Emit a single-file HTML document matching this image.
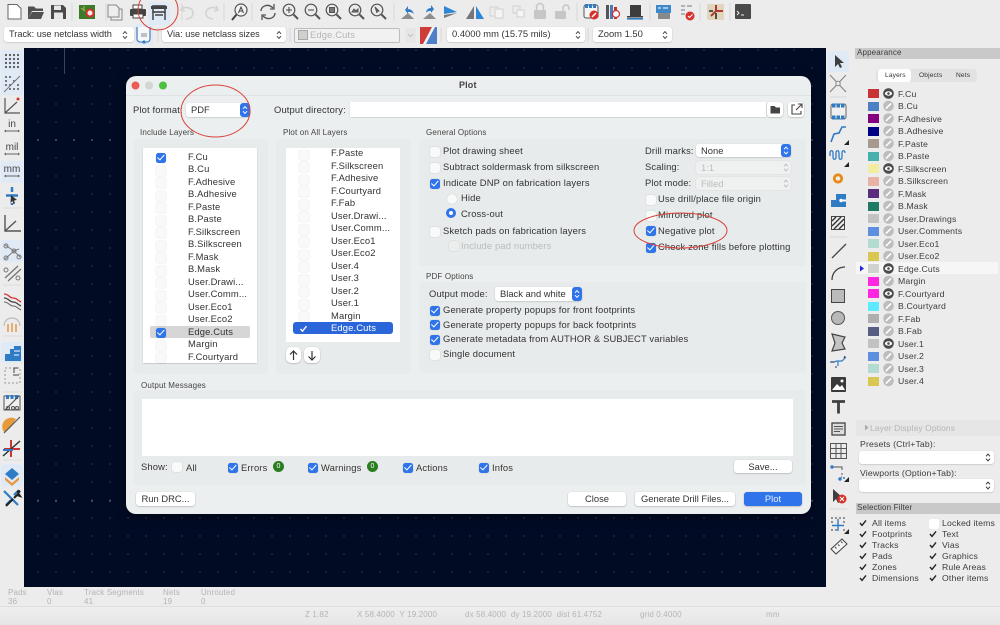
<!DOCTYPE html>
<html><head><meta charset="utf-8"><title>Plot</title>
<style>
html,body{margin:0;padding:0;background:#ececec}
#r{position:relative;width:1000px;height:625px;overflow:hidden;background:#ececec;font-family:"Liberation Sans",sans-serif;font-size:9.4px;color:#333;filter:blur(.3px)}
#r div,#r p,#r span{position:absolute;box-sizing:border-box}
p{margin:0;white-space:nowrap;line-height:12px;letter-spacing:.15px}
#cv{left:24px;top:48px;width:802px;height:539px;background-color:#010b24;background-image:radial-gradient(circle at 1px 1px,#47536c 0,#47536c .8px,transparent 1.1px),radial-gradient(circle at 1px 1px,#232f4a 0,#232f4a .7px,transparent 1px);background-size:18px 361px,18px 18px;background-position:13px 91px,13px 1px}
#dl{left:126px;top:76px;width:685px;height:438px;background:#ecefef;border-radius:10px;box-shadow:0 2px 12px rgba(0,0,0,.45)}
.g{background:#e8ebeb;border-radius:4px}
.w{background:#fff}
.s{background:#fff;border-radius:3px;box-shadow:0 .5px 1.5px rgba(0,0,0,.22);color:#333;padding-left:5px;line-height:14px}
.s span.b{right:0;top:0;width:10px;height:100%;background:#2f74ea;border-radius:3px}
.c{width:10px;height:10px;margin:.5px;background:#fff;border-radius:2.5px;box-shadow:0 0 1px rgba(0,0,0,.25)}
.c.o{background:#2f74ea}
.c.o:after{content:"";position:absolute;left:3.2px;top:.8px;width:2.6px;height:5.6px;border:solid #fff;border-width:0 1.6px 1.6px 0;transform:rotate(42deg)}
.c.n{background:#f8f9f9;box-shadow:0 0 1.2px rgba(0,0,0,.2)}
.btn{background:#fff;border-radius:3px;box-shadow:0 .5px 1.5px rgba(0,0,0,.3);text-align:center;height:14px;line-height:14px;color:#333}
.h{font-size:8px;color:#444}
.sw{width:11px;height:9px}
.hl{background:#e0eaf7;border-radius:2px}
.pn{font-size:8.7px;color:#3c3c3c}
.st{font-size:8px;color:#b4b4b4}
.u{left:0;width:24px;text-align:center;font-size:10px;color:#444;letter-spacing:0}
</style></head><body><div id="r">

<!-- status gradient -->
<div style="left:0;top:607px;width:1000px;height:18px;background:linear-gradient(#eeeeee,#e6e6e6)"></div>

<!-- toolbar highlights -->
<div class="hl" style="left:148px;top:2px;width:22px;height:23px"></div>
<div class="hl" style="left:135px;top:24px;width:18px;height:21px"></div>
<div class="hl" style="left:1px;top:50px;width:22px;height:45px"></div>
<div class="hl" style="left:1px;top:161px;width:22px;height:22px"></div>
<div class="hl" style="left:1px;top:240px;width:22px;height:22px"></div>
<div class="hl" style="left:1px;top:342px;width:22px;height:21px"></div>
<div class="hl" style="left:1px;top:464px;width:22px;height:23px"></div>
<div class="hl" style="left:828px;top:51px;width:21px;height:21px"></div>

<p class="u" style="top:119px">in</p>
<p class="u" style="top:142px">mil</p>
<p class="u" style="top:164px">mm</p>

<!-- second row -->
<div class="s" style="left:4px;top:27px;width:130px;height:15px;font-size:9.2px">Track: use netclass width</div>
<div class="s" style="left:162px;top:27px;width:124px;height:15px;font-size:9.2px">Via: use netclass sizes</div>
<div style="left:294px;top:28px;width:106px;height:15px;border:1px solid #bdbdbd;background:#f1f1f1;border-radius:2px"></div>
<div style="left:298px;top:30px;width:10px;height:10px;background:#cfcfcb;border:1px solid #a8a8a8"></div>
<p style="left:310px;top:29px;color:#b5b5b5">Edge.Cuts</p>
<div style="left:405px;top:28px;width:11px;height:15px;background:#e6e6e6;border-radius:2px"></div>
<div class="s" style="left:447px;top:27px;width:138px;height:15px;padding-left:5px;font-size:9.4px">0.4000 mm (15.75 mils)</div>
<div class="s" style="left:593px;top:27px;width:79px;height:15px;font-size:9.4px">Zoom 1.50</div>

<div id="cv"></div>
<div style="left:64px;top:48px;width:1px;height:26px;background:#3a4558"></div>

<!-- Dialog -->
<div id="dl"></div>
<div style="left:126px;top:95px;width:685px;height:1px;background:#dfe2e2"></div>
<p style="left:459px;top:79px;font-weight:bold;font-size:9px;color:#444">Plot</p>

<p style="left:133px;top:104px">Plot format:</p>
<div class="s" style="left:186px;top:103px;width:64px;height:14px">PDF<span class="b"></span></div>
<p style="left:274px;top:104px">Output directory:</p>
<div class="w" style="left:350px;top:102px;width:416px;height:15px;box-shadow:0 .5px 1px rgba(0,0,0,.2)"></div>
<div class="btn" style="left:767px;top:102px;width:16px;height:15px"></div>
<div class="btn" style="left:788px;top:102px;width:16px;height:15px"></div>

<!-- Include Layers -->
<p class="h" style="left:140px;top:127px">Include Layers</p>
<div class="g" style="left:134px;top:139px;width:134px;height:235px"></div>
<div class="w" style="left:143px;top:148px;width:114px;height:215px;box-shadow:0 .5px 1px rgba(0,0,0,.25)"></div>
<div style="left:150px;top:326px;width:100px;height:12px;background:#d6d6d6;border-radius:2px"></div>
<div class="c o" style="left:155px;top:152px"></div><p style="left:188px;top:151px">F.Cu</p>
<div class="c n" style="left:155px;top:165px"></div><p style="left:188px;top:163px">B.Cu</p>
<div class="c n" style="left:155px;top:177px"></div><p style="left:188px;top:176px">F.Adhesive</p>
<div class="c n" style="left:155px;top:190px"></div><p style="left:188px;top:188px">B.Adhesive</p>
<div class="c n" style="left:155px;top:202px"></div><p style="left:188px;top:201px">F.Paste</p>
<div class="c n" style="left:155px;top:215px"></div><p style="left:188px;top:213px">B.Paste</p>
<div class="c n" style="left:155px;top:227px"></div><p style="left:188px;top:226px">F.Silkscreen</p>
<div class="c n" style="left:155px;top:240px"></div><p style="left:188px;top:238px">B.Silkscreen</p>
<div class="c n" style="left:155px;top:252px"></div><p style="left:188px;top:251px">F.Mask</p>
<div class="c n" style="left:155px;top:265px"></div><p style="left:188px;top:263px">B.Mask</p>
<div class="c n" style="left:155px;top:277px"></div><p style="left:188px;top:276px">User.Drawi...</p>
<div class="c n" style="left:155px;top:290px"></div><p style="left:188px;top:288px">User.Comm...</p>
<div class="c n" style="left:155px;top:302px"></div><p style="left:188px;top:301px">User.Eco1</p>
<div class="c n" style="left:155px;top:315px"></div><p style="left:188px;top:313px">User.Eco2</p>
<div class="c o" style="left:155px;top:327px"></div><p style="left:188px;top:326px">Edge.Cuts</p>
<div class="c n" style="left:155px;top:340px"></div><p style="left:188px;top:338px">Margin</p>
<div class="c n" style="left:155px;top:352px"></div><p style="left:188px;top:351px">F.Courtyard</p>

<!-- Plot on All Layers -->
<p class="h" style="left:283px;top:127px">Plot on All Layers</p>
<div class="g" style="left:276px;top:139px;width:135px;height:235px"></div>
<div class="w" style="left:286px;top:148px;width:114px;height:194px"></div>
<div style="left:293px;top:322px;width:100px;height:12px;background:#2a66da;border-radius:3px"></div>
<div class="c n" style="left:298px;top:149px"></div><p style="left:331px;top:147px">F.Paste</p>
<div class="c n" style="left:298px;top:161px"></div><p style="left:331px;top:160px">F.Silkscreen</p>
<div class="c n" style="left:298px;top:174px"></div><p style="left:331px;top:172px">F.Adhesive</p>
<div class="c n" style="left:298px;top:186px"></div><p style="left:331px;top:185px">F.Courtyard</p>
<div class="c n" style="left:298px;top:199px"></div><p style="left:331px;top:197px">F.Fab</p>
<div class="c n" style="left:298px;top:211px"></div><p style="left:331px;top:210px">User.Drawi...</p>
<div class="c n" style="left:298px;top:224px"></div><p style="left:331px;top:222px">User.Comm...</p>
<div class="c n" style="left:298px;top:236px"></div><p style="left:331px;top:235px">User.Eco1</p>
<div class="c n" style="left:298px;top:249px"></div><p style="left:331px;top:247px">User.Eco2</p>
<div class="c n" style="left:298px;top:261px"></div><p style="left:331px;top:260px">User.4</p>
<div class="c n" style="left:298px;top:274px"></div><p style="left:331px;top:272px">User.3</p>
<div class="c n" style="left:298px;top:286px"></div><p style="left:331px;top:285px">User.2</p>
<div class="c n" style="left:298px;top:299px"></div><p style="left:331px;top:297px">User.1</p>
<div class="c n" style="left:298px;top:311px"></div><p style="left:331px;top:310px">Margin</p>
<p style="left:331px;top:322px;color:#fff">Edge.Cuts</p>
<div class="btn" style="left:286px;top:347px;width:15px;height:16px;border-radius:5px"></div>
<div class="btn" style="left:304px;top:347px;width:16px;height:16px;border-radius:5px"></div>

<!-- General options -->
<p class="h" style="left:426px;top:127px">General Options</p>
<div class="g" style="left:419px;top:139px;width:387px;height:127px"></div>
<div class="c n" style="left:429px;top:146px"></div><p style="left:443px;top:145px">Plot drawing sheet</p>
<div class="c n" style="left:429px;top:162px"></div><p style="left:443px;top:161px">Subtract soldermask from silkscreen</p>
<div class="c o" style="left:429px;top:178px"></div><p style="left:443px;top:177px">Indicate DNP on fabrication layers</p>
<div class="c n" style="left:446px;top:193px;border-radius:50%"></div><p style="left:461px;top:192px">Hide</p>
<div style="left:446px;top:208px;width:10px;height:10px;border-radius:50%;background:#fff;border:3px solid #2f74ea"></div><p style="left:461px;top:208px">Cross-out</p>
<div class="c n" style="left:429px;top:226px"></div><p style="left:443px;top:225px">Sketch pads on fabrication layers</p>
<div class="c n" style="left:448px;top:240px;background:#eceeee"></div><p style="left:461px;top:240px;color:#b9bcbc">Include pad numbers</p>

<p style="left:645px;top:145px">Drill marks:</p>
<div class="s" style="left:696px;top:144px;width:95px;height:13px;line-height:13px">None<span class="b"></span></div>
<p style="left:645px;top:161px">Scaling:</p>
<div class="s" style="left:696px;top:161px;width:95px;height:13px;line-height:13px;background:#eff1f1;color:#bbb;box-shadow:0 0 1px rgba(0,0,0,.15)">1:1</div>
<p style="left:645px;top:177px">Plot mode:</p>
<div class="s" style="left:696px;top:177px;width:95px;height:13px;line-height:13px;background:#eff1f1;color:#bbb;box-shadow:0 0 1px rgba(0,0,0,.15)">Filled</div>
<div class="c n" style="left:645px;top:194px"></div><p style="left:658px;top:193px">Use drill/place file origin</p>
<div class="c n" style="left:645px;top:210px"></div><p style="left:658px;top:209px">Mirrored plot</p>
<div class="c o" style="left:645px;top:225px"></div><p style="left:658px;top:225px">Negative plot</p>
<div class="c o" style="left:645px;top:242px"></div><p style="left:658px;top:241px">Check zone fills before plotting</p>

<!-- PDF options -->
<p class="h" style="left:426px;top:271px">PDF Options</p>
<div class="g" style="left:419px;top:282px;width:387px;height:91px"></div>
<p style="left:429px;top:288px">Output mode:</p>
<div class="s" style="left:495px;top:287px;width:87px;height:14px">Black and white<span class="b"></span></div>
<div class="c o" style="left:429px;top:305px"></div><p style="left:443px;top:304px">Generate property popups for front footprints</p>
<div class="c o" style="left:429px;top:319px"></div><p style="left:443px;top:319px">Generate property popups for back footprints</p>
<div class="c o" style="left:429px;top:334px"></div><p style="left:443px;top:333px">Generate metadata from AUTHOR &amp; SUBJECT variables</p>
<div class="c n" style="left:429px;top:349px"></div><p style="left:443px;top:348px">Single document</p>

<!-- Output messages -->
<p class="h" style="left:141px;top:380px">Output Messages</p>
<div class="g" style="left:134px;top:390px;width:672px;height:95px"></div>
<div class="w" style="left:142px;top:399px;width:651px;height:57px"></div>
<p style="left:141px;top:461px">Show:</p>
<div class="c n" style="left:171px;top:461px"></div><p style="left:186px;top:462px">All</p>
<div class="c o" style="left:227px;top:462px"></div><p style="left:241px;top:462px">Errors</p>
<div style="left:273px;top:461px;width:11px;height:11px;border-radius:50%;background:#2a7d1f;color:#fff;font-size:7px;line-height:11px;text-align:center">0</div>
<div class="c o" style="left:307px;top:462px"></div><p style="left:321px;top:462px">Warnings</p>
<div style="left:367px;top:461px;width:11px;height:11px;border-radius:50%;background:#2a7d1f;color:#fff;font-size:7px;line-height:11px;text-align:center">0</div>
<div class="c o" style="left:402px;top:462px"></div><p style="left:416px;top:462px">Actions</p>
<div class="c o" style="left:478px;top:462px"></div><p style="left:492px;top:462px">Infos</p>
<div class="btn" style="left:734px;top:460px;width:58px;height:13px;line-height:13px">Save...</div>

<div class="btn" style="left:136px;top:492px;width:59px">Run DRC...</div>
<div class="btn" style="left:568px;top:492px;width:58px">Close</div>
<div class="btn" style="left:635px;top:492px;width:100px">Generate Drill Files...</div>
<div class="btn" style="left:744px;top:492px;width:58px;background:#2f74ea;color:#e8f0ff">Plot</div>

<!-- Appearance panel -->
<div style="left:855px;top:48px;width:145px;height:11px;background:#c9c9c9"></div>
<p class="pn" style="left:857px;top:47px;font-size:8px">Appearance</p>
<div style="left:876px;top:69px;width:101px;height:13px;background:#e2e2e2;border-radius:4px"></div>
<div style="left:878px;top:69px;width:33px;height:13px;background:#fff;border-radius:3px"></div>
<p style="left:885px;top:69px;font-size:6.6px;line-height:13px">Layers</p>
<p style="left:919px;top:69px;font-size:6.6px;line-height:13px">Objects</p>
<p style="left:956px;top:69px;font-size:6.6px;line-height:13px">Nets</p>
<div style="left:856px;top:262px;width:142px;height:12px;background:#f6f6f6"></div>

<div class="sw" style="left:868px;top:89px;background:#c83434"></div><p class="pn" style="left:898px;top:88px">F.Cu</p>
<div class="sw" style="left:868px;top:102px;background:#4d7fc4"></div><p class="pn" style="left:898px;top:100px">B.Cu</p>
<div class="sw" style="left:868px;top:114px;background:#84007f"></div><p class="pn" style="left:898px;top:113px">F.Adhesive</p>
<div class="sw" style="left:868px;top:127px;background:#000084"></div><p class="pn" style="left:898px;top:125px">B.Adhesive</p>
<div class="sw" style="left:868px;top:139px;background:#a79890"></div><p class="pn" style="left:898px;top:138px">F.Paste</p>
<div class="sw" style="left:868px;top:152px;background:#45b0ac"></div><p class="pn" style="left:898px;top:150px">B.Paste</p>
<div class="sw" style="left:868px;top:164px;background:#f2eda1"></div><p class="pn" style="left:898px;top:163px">F.Silkscreen</p>
<div class="sw" style="left:868px;top:177px;background:#e8b2a7"></div><p class="pn" style="left:898px;top:175px">B.Silkscreen</p>
<div class="sw" style="left:868px;top:189px;background:#5b2d7e"></div><p class="pn" style="left:898px;top:188px">F.Mask</p>
<div class="sw" style="left:868px;top:202px;background:#1e7a62"></div><p class="pn" style="left:898px;top:200px">B.Mask</p>
<div class="sw" style="left:868px;top:214px;background:#c2c2c2"></div><p class="pn" style="left:898px;top:213px">User.Drawings</p>
<div class="sw" style="left:868px;top:227px;background:#5e8ee0"></div><p class="pn" style="left:898px;top:225px">User.Comments</p>
<div class="sw" style="left:868px;top:239px;background:#b4dbd2"></div><p class="pn" style="left:898px;top:238px">User.Eco1</p>
<div class="sw" style="left:868px;top:252px;background:#d8c852"></div><p class="pn" style="left:898px;top:250px">User.Eco2</p>
<div class="sw" style="left:868px;top:264px;background:#d0d2cd"></div><p class="pn" style="left:898px;top:263px">Edge.Cuts</p>
<div class="sw" style="left:868px;top:277px;background:#ff26e2"></div><p class="pn" style="left:898px;top:275px">Margin</p>
<div class="sw" style="left:868px;top:289px;background:#ff26e2"></div><p class="pn" style="left:898px;top:288px">F.Courtyard</p>
<div class="sw" style="left:868px;top:302px;background:#5de9ff"></div><p class="pn" style="left:898px;top:300px">B.Courtyard</p>
<div class="sw" style="left:868px;top:314px;background:#afafaf"></div><p class="pn" style="left:898px;top:313px">F.Fab</p>
<div class="sw" style="left:868px;top:327px;background:#585d84"></div><p class="pn" style="left:898px;top:325px">B.Fab</p>
<div class="sw" style="left:868px;top:339px;background:#c2c2c2"></div><p class="pn" style="left:898px;top:338px">User.1</p>
<div class="sw" style="left:868px;top:352px;background:#5e8ee0"></div><p class="pn" style="left:898px;top:350px">User.2</p>
<div class="sw" style="left:868px;top:364px;background:#b4dbd2"></div><p class="pn" style="left:898px;top:363px">User.3</p>
<div class="sw" style="left:868px;top:377px;background:#d8c852"></div><p class="pn" style="left:898px;top:375px">User.4</p>

<div style="left:856px;top:420px;width:144px;height:16px;background:#e6e6e6"></div>
<p style="left:870px;top:422px;font-size:8.4px;color:#b5b5b5">Layer Display Options</p>
<p class="pn" style="left:860px;top:438px">Presets (Ctrl+Tab):</p>
<div class="s" style="left:859px;top:451px;width:135px;height:13px"></div>
<p class="pn" style="left:860px;top:467px">Viewports (Option+Tab):</p>
<div class="s" style="left:859px;top:479px;width:135px;height:13px"></div>

<div style="left:856px;top:503px;width:144px;height:11px;background:#c9c9c9"></div>
<p class="pn" style="left:857px;top:502px;font-size:8px">Selection Filter</p>
<p class="pn" style="left:872px;top:517px">All items</p>
<p class="pn" style="left:872px;top:528px">Footprints</p>
<p class="pn" style="left:872px;top:539px">Tracks</p>
<p class="pn" style="left:872px;top:550px">Pads</p>
<p class="pn" style="left:872px;top:561px">Zones</p>
<p class="pn" style="left:872px;top:572px">Dimensions</p>
<div class="c" style="left:928px;top:518px;box-shadow:none"></div>
<p class="pn" style="left:942px;top:517px">Locked items</p>
<p class="pn" style="left:942px;top:528px">Text</p>
<p class="pn" style="left:942px;top:539px">Vias</p>
<p class="pn" style="left:942px;top:550px">Graphics</p>
<p class="pn" style="left:942px;top:561px">Rule Areas</p>
<p class="pn" style="left:942px;top:572px">Other items</p>

<!-- Status -->
<div style="left:0;top:606px;width:1000px;height:1px;background:#dedede"></div>
<p class="st" style="left:8px;top:587px">Pads</p><p class="st" style="left:8px;top:596px">36</p>
<p class="st" style="left:47px;top:587px">Vias</p><p class="st" style="left:47px;top:596px">0</p>
<p class="st" style="left:84px;top:587px">Track Segments</p><p class="st" style="left:84px;top:596px">41</p>
<p class="st" style="left:163px;top:587px">Nets</p><p class="st" style="left:163px;top:596px">19</p>
<p class="st" style="left:201px;top:587px">Unrouted</p><p class="st" style="left:201px;top:596px">0</p>
<p class="st" style="left:305px;top:609px">Z 1.82</p>
<p class="st" style="left:357px;top:609px">X 58.4000&nbsp; Y 19.2000</p>
<p class="st" style="left:465px;top:609px">dx 58.4000&nbsp; dy 19.2000&nbsp; dist 61.4752</p>
<p class="st" style="left:640px;top:609px">grid 0.4000</p>
<p class="st" style="left:766px;top:609px">mm</p>

<svg width="1000" height="625" viewBox="0 0 1000 625" style="position:absolute;left:0;top:0" fill="none">
<defs>
<path id="ch" d="M-2-1.2 0-3.4 2-1.2M-2 1.2 0 3.4 2 1.2" stroke-width="1"/>
<g id="eo"><circle r="5.3" fill="#4a4a4a"/><ellipse rx="3.6" ry="2.2" fill="#fff"/><circle r="1.3" fill="#4a4a4a"/></g>
<g id="es"><circle r="5.3" fill="#bdbdbd"/><path d="M-2.6 2.6 2.6-2.6" stroke="#fff" stroke-width="1.6"/></g>
<path id="tk" d="M-3 0-1 2.4 3-2.6" stroke="#222" stroke-width="1.4"/>
</defs>

<!-- top toolbar -->
<path d="M8 4.5h9l4 4V19H8z" fill="#fff" stroke="#666"/>
<path d="M28 19V6.5h6l2 2h7V11H32l-4 8z" fill="#505050"/><path d="M32 12h12l-3 7H28z" fill="#505050"/>
<path d="M51 5h12l3 3v11H51z" fill="#4a4a4a"/><rect x="54" y="5.5" width="7" height="4.5" fill="#e8e8e8"/><rect x="54" y="12.5" width="9" height="6.5" fill="#e8e8e8"/>
<rect x="79" y="5" width="16" height="14" fill="#3d7a2c"/><circle cx="90" cy="13" r="3.5" fill="#eee" stroke="#d6322c" stroke-width="2"/><path d="M81 8l4 3M84 6v4" stroke="#a8c04a"/>
<path d="M108 5h8l3 3v9h-11zM111 17v3h11V9h-3" stroke="#888" fill="#eee"/>
<rect x="133" y="5" width="9" height="4" fill="#fff" stroke="#444"/><rect x="130" y="9" width="16" height="7" rx="1" fill="#444"/><rect x="133" y="14" width="10" height="4" fill="#fff" stroke="#444"/>
<rect x="153" y="6" width="12" height="6" fill="none" stroke="#444" stroke-width="1.6"/><rect x="151" y="6" width="16" height="3" fill="#444"/><path d="M153 12v8M165 12v8M155 15h8" stroke="#444" stroke-width="1.5"/>
<path d="M183 6l-2 4 4 1M182 9c4-3 11-1 11 4s-5 6-7 6" stroke="#d2d2d2" stroke-width="1.5"/>
<path d="M216 6l2 4-4 1M217 9c-4-3-11-1-11 4s5 6 7 6" stroke="#d2d2d2" stroke-width="1.5"/>
<circle cx="241" cy="10" r="6" stroke="#555" stroke-width="1.2" fill="#f2f2f2"/><path d="M236.5 14.5 232 20" stroke="#444" stroke-width="2"/><path d="M238.5 13l2.5-6 2.500 6M239.5 11h3" stroke="#444"/>
<path d="M261 11c0-5 7-8 12-3M275 13c0 5-7 8-12 3" stroke="#555" stroke-width="1.4"/><path d="M274 4v5h-4M262 20v-5h4" stroke="#555" stroke-width="1.3"/>
<g stroke="#555"><circle cx="289" cy="10" r="5.8" stroke-width="1.2"/><path d="M293.5 14.5 298 19" stroke-width="2"/><path d="M286 10h6M289 7v6" stroke="#444"/>
<circle cx="311" cy="10" r="5.8" stroke-width="1.2"/><path d="M315.5 14.5 320 19" stroke-width="2"/><path d="M308 10h6" stroke="#444"/>
<circle cx="332" cy="10" r="5.8" stroke-width="1.2"/><path d="M336.5 14.5 341 19" stroke-width="2"/><rect x="329.5" y="7.5" width="5" height="5" fill="#777"/>
<circle cx="355" cy="10" r="5.8" stroke-width="1.2"/><path d="M359.5 14.5 364 19" stroke-width="2"/><path d="M352 12l2-3 2 2 2-2v3z" fill="#777"/>
<circle cx="377" cy="10" r="5.8" stroke-width="1.2"/><path d="M381.5 14.5 386 19" stroke-width="2"/><path d="M375 7l4 4-2 .5 0 1.5z" fill="#666"/></g>
<path d="M401 19l7-6 6 6z" fill="#8d8d8d"/><path d="M405 10l3-4v3c3 0 5 2 6 5-2-2-4-2-6-2v2z" fill="#2f7bc4"/>
<path d="M423 19l7-6 6 6z" fill="#8d8d8d"/><path d="M434 9l-3-4v3c-3 0-5 2-5 5 1-2 3-2 5-2v2z" fill="#2f7bc4"/>
<path d="M444 6l13 6-13 2z" fill="#2f86d4"/><path d="M444 15l13-2-13 5z" fill="#777"/>
<path d="M474 6v13h-8z" fill="#777"/><path d="M476 6v13h8z" fill="#2f86d4"/>
<g stroke="#d0d0d0" fill="#ececec"><rect x="490" y="7" width="8" height="9"/><rect x="495" y="9" width="8" height="9" fill="#f4f4f4"/><rect x="513" y="6" width="7" height="7"/><rect x="517" y="10" width="7" height="7" fill="#f4f4f4"/></g>
<rect x="534" y="10" width="12" height="9" rx="1" fill="#c6c6c6"/><path d="M536.5 10V7a3.5 3.5 0 0 1 7 0v3" stroke="#c6c6c6" stroke-width="1.5"/>
<rect x="555" y="11" width="11" height="8" rx="1" fill="#c6c6c6"/><path d="M563 11V8a3 3 0 0 1 6 0v2" stroke="#c6c6c6" stroke-width="1.5"/>
<rect x="584" y="5" width="14" height="13" rx="2" stroke="#555" fill="#f4f4f4"/><g fill="#2f7bc4"><rect x="585" y="4" width="3" height="4"/><rect x="589" y="4" width="3" height="4"/><rect x="593" y="4" width="3" height="4"/></g><circle cx="594" cy="15" r="4.5" fill="#d6322c"/><path d="M592 17l4-4" stroke="#fff" stroke-width="1.5"/>
<rect x="606" y="5" width="3" height="14" fill="#555"/><rect x="610" y="5" width="3" height="14" fill="#4e78b8"/><rect x="614" y="7" width="3" height="12" fill="#b33"/><circle cx="616" cy="14" r="3.5" stroke="#c33" stroke-width="1.2" fill="#fff"/>
<rect x="630" y="5" width="11" height="11" fill="#3d3d3d"/><rect x="627" y="16" width="16" height="1.5" fill="#3d3d3d"/><rect x="627" y="18" width="16" height="1.6" fill="#2f7bc4"/>
<rect x="656" y="5" width="15" height="8" fill="#3f88c8"/><rect x="658" y="13" width="12" height="6" fill="#8a8a8a"/><path d="M658 8h3M663 8h5" stroke="#fff"/>
<path d="M681 6h4M681 10h4M681 14h4" stroke="#777"/><path d="M687 6h5" stroke="#777"/><circle cx="690" cy="16" r="4.5" fill="#d6322c"/><path d="M688 16l1.5 1.5 3-3" stroke="#fff"/>
<rect x="707" y="4" width="17" height="16" rx="2" fill="#e0d5bd"/><path d="M716 5v6l-5 5M716 11h7" stroke="#b03a2e" stroke-width="2"/><path d="M709 11h4M716 13v6" stroke="#222" stroke-width="1.5"/>
<rect x="735" y="4" width="16" height="15" rx="1" fill="#4a4a4a"/><path d="M737 11l2 2-2 2M741 15h3" stroke="#eee"/>
<path d="M72 3v18M106 3v18M182 3v18M224 3v18M252 3v18M394 3v18M577 3v18M650 3v18M700 3v18M730 3v18" stroke="#d8d8d8"/>

<!-- second-row icons -->
<path d="M137 27v12a3 3 0 0 0 3 3h7a3 3 0 0 0 3-3V27" stroke="#3a6fb0" stroke-width="1.1" fill="#f4f8fc"/><path d="M141 34h6M141 36h6" stroke="#888"/><circle cx="144" cy="42" r="1.6" fill="#2f7bc4"/>
<use href="#ch" x="125" y="35" stroke="#444"/><use href="#ch" x="279" y="35" stroke="#444"/><use href="#ch" x="578" y="35" stroke="#444"/><use href="#ch" x="665" y="35" stroke="#444"/>
<path d="M408 34l2.5 2.5L413 34" stroke="#c0c0c0"/>
<path d="M420 27h17v17h-17z" fill="#4f7fc9"/><path d="M420 27h12l-9 17h-3z" fill="#cf3b36"/><path d="M432 27l-9 17h3l9-17z" fill="#f2f2f2"/>
<path d="M441 28v14M588 28v14M158 28v14M290 28v14" stroke="#d8d8d8"/>

<!-- dialog chrome -->
<circle cx="135.500" cy="85.5" r="4" fill="#ee5b52"/><circle cx="149" cy="85.5" r="4" fill="#d3d5d5"/><circle cx="163" cy="85.5" r="4" fill="#4fbf42"/>
<use href="#ch" x="245" y="110" stroke="#fff"/><use href="#ch" x="786" y="150.5" stroke="#fff"/><use href="#ch" x="577" y="294" stroke="#fff"/>
<use href="#ch" x="786" y="167.5" stroke="#bbb"/><use href="#ch" x="786" y="183.5" stroke="#bbb"/>
<path d="M770.5 106h4l1.5 1.5h4v6h-9.5z" fill="#444"/>
<path d="M795 105h-3v9h9v-3M796 110l6-6M798 104h4v4" stroke="#444" stroke-width="1.1"/>
<path d="M293.5 360v-9M290 354.5l3.5-3.5 3.5 3.5M312 351v9M308.5 356.5l3.5 3.5 3.5-3.5" stroke="#333" stroke-width="1.2"/>
<path d="M300.5 329l2 2.2 4-5" stroke="#fff" stroke-width="1.4"/>

<!-- left toolbar -->
<g fill="#555"><circle cx="6" cy="55" r="1.1"/><circle cx="10" cy="55" r="1.1"/><circle cx="14" cy="55" r="1.1"/><circle cx="18" cy="55" r="1.1"/><circle cx="6" cy="59" r="1.1"/><circle cx="10" cy="59" r="1.1"/><circle cx="14" cy="59" r="1.1"/><circle cx="18" cy="59" r="1.1"/><circle cx="6" cy="63" r="1.1"/><circle cx="10" cy="63" r="1.1"/><circle cx="14" cy="63" r="1.1"/><circle cx="18" cy="63" r="1.1"/><circle cx="6" cy="67" r="1.1"/><circle cx="10" cy="67" r="1.1"/><circle cx="14" cy="67" r="1.1"/><circle cx="18" cy="67" r="1.1"/>
<circle cx="6" cy="77" r="1"/><circle cx="10" cy="77" r="1"/><circle cx="6" cy="81" r="1"/><circle cx="14" cy="81" r="1"/><circle cx="6" cy="85" r="1"/><circle cx="10" cy="85" r="1"/><circle cx="18" cy="85" r="1"/><circle cx="14" cy="89" r="1"/><circle cx="18" cy="89" r="1"/><circle cx="10" cy="89" r="1"/></g>
<path d="M4 92 20 76" stroke="#777"/>
<path d="M5 98v15h15M5 113l12-11" stroke="#555" stroke-width="1.2"/><circle cx="18" cy="99" r="1.5" fill="#d6322c"/>
<path d="M5 131h14M5 154h14M5 176h14" stroke="#666"/>
<path d="M4 131l2-1.5v3zM20 131l-2-1.5v3zM4 154l2-1.5v3zM20 154l-2-1.5v3zM4 176l2-1.5v3zM20 176l-2-1.5v3z" fill="#666"/>
<path d="M12 187v5M12 203v2M6 195.5h12" stroke="#2f7bc4" stroke-width="2.5"/><path d="M11 195l6 5-3 .5 1 3-1.5 .5-1-3-2 2z" fill="#333"/>
<path d="M5 215v16h16M5 231l11-10" stroke="#555" stroke-width="1.4"/>
<path d="M5 245l9 6 5-2M5 259l9-8 6 6" stroke="#777"/><circle cx="6" cy="246" r="2" stroke="#777"/><circle cx="14" cy="251" r="2" stroke="#777"/><circle cx="6" cy="258" r="2" stroke="#777"/><circle cx="19" cy="257" r="2" stroke="#777"/>
<path d="M5 278 18 266M8 281 21 269" stroke="#777" stroke-width="1.4"/><circle cx="6" cy="270" r="2" stroke="#777"/><circle cx="18" cy="278" r="2" stroke="#777"/>
<path d="M4 294c5 0 5 4 9 4s4 2 8 4" stroke="#d6322c" stroke-width="1.3"/><path d="M4 298c5 0 5 4 9 4s4 2 8 4" stroke="#444" stroke-width="1.3"/><path d="M4 302c5 0 5 4 9 4s4 2 8 4" stroke="#666"/>
<path d="M4 326a8 8 0 0 1 16 0" stroke="#bbb" stroke-width="1.2"/><path d="M8 324v8M12 323v9M16 324v8" stroke="#e39a4a" stroke-width="1.5"/>
<path d="M5 361v-7h5v-5h4v-3h7v15z" fill="#2f7bc4"/><path d="M14 351l6 0M14 355l5 0" stroke="#fff"/>
<rect x="5" y="368" width="15" height="15" stroke="#999" stroke-dasharray="2 2"/><path d="M14 373v-5h4M13 375h6" stroke="#444"/>
<rect x="4" y="396" width="16" height="14" stroke="#555" fill="#f0f0f0"/><g fill="#2f7bc4"><rect x="6" y="395" width="3" height="4"/><rect x="10.5" y="395" width="3" height="4"/><rect x="15" y="395" width="3" height="4"/></g><path d="M5 410 19 396" stroke="#444"/><circle cx="8" cy="408" r="1.5" stroke="#555"/><circle cx="13" cy="408" r="1.5" stroke="#555"/><circle cx="17" cy="408" r="1.5" stroke="#555"/>
<path d="M4 432a9 9 0 0 1 12-13l-6 9z" fill="#e79a3a"/><path d="M4 433 20 417" stroke="#555" stroke-width="1.2"/>
<path d="M11 440v17M4 449h16" stroke="#c33" stroke-width="2"/><path d="M3 456 20 441" stroke="#333" stroke-width="1.5"/><path d="M3 450h10" stroke="#2f7bc4" stroke-width="2"/>
<path d="M12 468l7 6-7 6-7-6z" fill="#2f7bc4"/><path d="M5 477l7 6 7-6v3l-7 6-7-6z" fill="#e79a3a"/>
<path d="M4 491l14 14M6 505l5-5M14 495l5-5" stroke="#2f7bc4" stroke-width="2.2"/><path d="M6 506l7-7M14 498l3-3 3 1-2-3 2-2-3 1" stroke="#222" stroke-width="2"/>
<path d="M3 208h19M3 285h19M3 336h19M3 392h19M3 460h19" stroke="#dcdcdc"/>

<!-- right toolbar -->
<path d="M835 55l0 12 3-3 2 4 2-1-2-4 4 0z" fill="#3e3e3e"/>
<path d="M830 75l16 17M846 75l-16 17" stroke="#888" stroke-width="1.2"/><circle cx="838" cy="83.5" r="2.2" fill="#ececec" stroke="#888"/>
<path d="M830 97h17" stroke="#d8d8d8"/>
<rect x="831" y="104" width="15" height="15" rx="2" stroke="#666" fill="#f0f0f0"/><g fill="#2f7bc4"><rect x="832" y="103.5" width="3.5" height="4"/><rect x="836.5" y="103.5" width="3.5" height="4"/><rect x="841" y="103.5" width="3.5" height="4"/><rect x="832" y="115.5" width="3.5" height="4"/><rect x="836.5" y="115.5" width="3.5" height="4"/><rect x="841" y="115.5" width="3.5" height="4"/></g>
<path d="M831 142l3-8 5-1 3-6 4 0" stroke="#2f7bc4" stroke-width="1.6"/><path d="M849 140v5h-5z" fill="#222"/>
<path d="M830 156v-3c0-3 3-3 3 0v4c0 3 3 3 3 0v-4c0-3 3-3 3 0v4c0 3 3 3 3 0v-4c0-3 3-3 3 0" stroke="#2f7bc4" stroke-width="1.3"/><path d="M849 162v5h-5z" fill="#222"/>
<circle cx="838" cy="178.5" r="3.7" stroke="#ea8a16" stroke-width="2.8"/>
<path d="M831 207v-7h5v-6h10v13z" fill="#2f7bc4"/><path d="M840 200.5h6" stroke="#fff" stroke-width="2"/><circle cx="841" cy="200.5" r="1.7" fill="#fff"/>
<rect x="831.5" y="216.5" width="13" height="13" stroke="#444"/><path d="M832 221l4-4M832 226l9-9M834 229l10-10M839 229l5-5" stroke="#333" stroke-width="1.4"/>
<path d="M830 237h17" stroke="#d8d8d8"/>
<path d="M832 258 846 244" stroke="#444" stroke-width="1.3"/>
<path d="M832 280c0-8 6-13 13-13" stroke="#444" stroke-width="1.3"/>
<rect x="831.5" y="289.5" width="13" height="13" fill="#bbb" stroke="#444"/>
<circle cx="838" cy="318" r="6.5" fill="#b8b8b8" stroke="#555"/>
<path d="M832 334l13 3-3 6 3 6-13 2 3-8z" fill="#c4c4c4" stroke="#444" stroke-width="1.2"/>
<path d="M830 362h4l3-1h5l4-4M838 361v5" stroke="#2f7bc4" stroke-width="1.2"/><path d="M831 362h3M836 366v2M844 358l1-2" stroke="#333"/>
<rect x="831" y="377" width="15" height="15" rx="1" fill="#3a3a3a"/><path d="M832 390l5-6 3 3 2-2 3 5z" fill="#fff"/><circle cx="842" cy="381" r="1.5" fill="#fff"/>
<path d="M832 401.500h13M838.5 401.5v12" stroke="#3f3f3f" stroke-width="2.8"/>
<rect x="832" y="423" width="13" height="12" fill="#ddd" stroke="#444" stroke-width="1.3"/><path d="M834 426.5h9M834 429h9M834 431.5h6" stroke="#555"/>
<path d="M830.5 443.5h16v15h-16zM830.5 448.5h16M830.5 453.5h16M836 443.5v15M841 443.5v15" stroke="#555"/>
<path d="M832 467h10v3M842 473v2M842 477h-1" stroke="#555"/><circle cx="832" cy="467" r="1.7" fill="#2f7bc4"/><circle cx="840" cy="479" r="1.7" fill="#2f7bc4"/><path d="M843 478h2" stroke="#2f7bc4" stroke-width="1.5"/><path d="M849 477v5h-5z" fill="#222"/>
<path d="M833 489l0 13 3-3 2 4 2-1-2-4 4-1z" fill="#3e3e3e"/><circle cx="842" cy="499" r="4.5" fill="#d6322c"/><path d="M840 497l4 4M844 497l-4 4" stroke="#fff"/>
<path d="M830 509h17" stroke="#d8d8d8"/>
<g fill="#555"><circle cx="832" cy="518" r=".9"/><circle cx="836" cy="518" r=".9"/><circle cx="840" cy="518" r=".9"/><circle cx="844" cy="518" r=".9"/><circle cx="832" cy="522" r=".9"/><circle cx="844" cy="522" r=".9"/><circle cx="832" cy="530" r=".9"/><circle cx="836" cy="530" r=".9"/><circle cx="844" cy="530" r=".9"/></g><path d="M832 525.5h12M838 519v12" stroke="#2f7bc4" stroke-width="1.4"/><path d="M849 529v5h-5z" fill="#222"/>
<path d="M831 549l11-10 5 5-11 10z" fill="#f4f4f4" stroke="#444"/><path d="M835 547l1.5 1.5M838 544.5l1.5 1.5M841 541.5l1.5 1.5" stroke="#444"/>

<!-- eyes -->
<use href="#eo" x="888.5" y="93.5"/><use href="#es" x="888.5" y="106"/><use href="#es" x="888.5" y="118.5"/><use href="#es" x="888.5" y="131"/><use href="#es" x="888.5" y="143.5"/><use href="#es" x="888.5" y="156"/><use href="#eo" x="888.5" y="168.5"/><use href="#es" x="888.5" y="181"/><use href="#es" x="888.5" y="193.5"/><use href="#es" x="888.5" y="206"/><use href="#es" x="888.5" y="218.5"/><use href="#es" x="888.5" y="231"/><use href="#es" x="888.5" y="243.5"/><use href="#es" x="888.5" y="256"/><use href="#eo" x="888.5" y="268.5"/><use href="#es" x="888.5" y="281"/><use href="#eo" x="888.5" y="293.5"/><use href="#es" x="888.5" y="306"/><use href="#es" x="888.5" y="318.5"/><use href="#es" x="888.5" y="331"/><use href="#eo" x="888.5" y="343.5"/><use href="#es" x="888.5" y="356"/><use href="#es" x="888.5" y="368.5"/><use href="#es" x="888.5" y="381"/>
<path d="M860 265.5l4 3-4 3z" fill="#2222dd"/>
<path d="M865 424.5l3.5 3-3.5 3z" fill="#aaa"/>
<use href="#ch" x="988" y="457.5" stroke="#333"/><use href="#ch" x="988" y="485.5" stroke="#333"/>

<!-- selection filter ticks -->
<use href="#tk" x="863" y="523"/><use href="#tk" x="863" y="534"/><use href="#tk" x="863" y="545"/><use href="#tk" x="863" y="556"/><use href="#tk" x="863" y="567"/><use href="#tk" x="863" y="578"/>
<use href="#tk" x="933" y="534"/><use href="#tk" x="933" y="545"/><use href="#tk" x="933" y="556"/><use href="#tk" x="933" y="567"/><use href="#tk" x="933" y="578"/>

<!-- red annotations -->
<circle cx="158" cy="10" r="20" stroke="#d9423b" stroke-width="1"/>
<ellipse cx="215.5" cy="111" rx="34.5" ry="26" stroke="#d9423b" stroke-width="1"/>
<ellipse cx="680.5" cy="230.5" rx="46.5" ry="17.5" stroke="#d9423b" stroke-width="1"/>
</svg>
</div></body></html>
